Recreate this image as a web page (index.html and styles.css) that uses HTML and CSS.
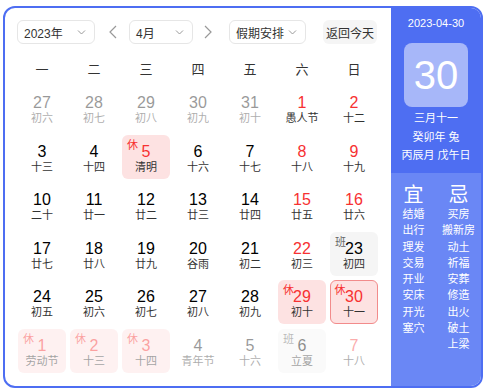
FILE: index.html
```html
<!DOCTYPE html>
<html lang="zh-CN">
<head>
    <meta charset="UTF-8">
    <meta name="viewport" content="width=device-width, initial-scale=1.0">
    <title>万年历</title>
    <link rel="stylesheet" href="styles.css">
</head>
<body>

    <div class="calendar">
        <div class="main">
            <div class="toolbar">
                <div class="select year">2023年
                    <svg width="9" height="5" viewBox="0 0 9 5"><path d="M1 0.5l3.5 3.5 3.5-3.5" fill="none" stroke="#999" stroke-width="1"/></svg>
                </div>
                <span class="arrow prev">
                    <svg width="8" height="14" viewBox="0 0 8 14"><path d="M7 1L1 7l6 6" fill="none" stroke="#999" stroke-width="1.2"/></svg>
                </span>
                <div class="select month">4月
                    <svg width="9" height="5" viewBox="0 0 9 5"><path d="M1 0.5l3.5 3.5 3.5-3.5" fill="none" stroke="#999" stroke-width="1"/></svg>
                </div>
                <span class="arrow next">
                    <svg width="8" height="14" viewBox="0 0 8 14"><path d="M1 1l6 6-6 6" fill="none" stroke="#999" stroke-width="1.2"/></svg>
                </span>
                <div class="select holiday">假期安排
                    <svg width="9" height="5" viewBox="0 0 9 5"><path d="M1 0.5l3.5 3.5 3.5-3.5" fill="none" stroke="#999" stroke-width="1"/></svg>
                </div>
                <button class="today-btn">返回今天</button>
            </div>

            <div class="week">
                <span>一</span><span>二</span><span>三</span><span>四</span><span>五</span><span>六</span><span>日</span>
            </div>

            <div class="days">
                <!-- row 1 -->
                <div class="cell other"><b>27</b><i>初六</i></div>
                <div class="cell other"><b>28</b><i>初七</i></div>
                <div class="cell other"><b>29</b><i>初八</i></div>
                <div class="cell other"><b>30</b><i>初九</i></div>
                <div class="cell other"><b>31</b><i>初十</i></div>
                <div class="cell weekend"><b>1</b><i>愚人节</i></div>
                <div class="cell weekend"><b>2</b><i>十二</i></div>
                <!-- row 2 -->
                <div class="cell"><b>3</b><i>十三</i></div>
                <div class="cell"><b>4</b><i>十四</i></div>
                <div class="cell rest"><em>休</em><b>5</b><i>清明</i></div>
                <div class="cell"><b>6</b><i>十六</i></div>
                <div class="cell"><b>7</b><i>十七</i></div>
                <div class="cell weekend"><b>8</b><i>十八</i></div>
                <div class="cell weekend"><b>9</b><i>十九</i></div>
                <!-- row 3 -->
                <div class="cell"><b>10</b><i>二十</i></div>
                <div class="cell"><b>11</b><i>廿一</i></div>
                <div class="cell"><b>12</b><i>廿二</i></div>
                <div class="cell"><b>13</b><i>廿三</i></div>
                <div class="cell"><b>14</b><i>廿四</i></div>
                <div class="cell weekend"><b>15</b><i>廿五</i></div>
                <div class="cell weekend"><b>16</b><i>廿六</i></div>
                <!-- row 4 -->
                <div class="cell"><b>17</b><i>廿七</i></div>
                <div class="cell"><b>18</b><i>廿八</i></div>
                <div class="cell"><b>19</b><i>廿九</i></div>
                <div class="cell"><b>20</b><i>谷雨</i></div>
                <div class="cell"><b>21</b><i>初二</i></div>
                <div class="cell weekend"><b>22</b><i>初三</i></div>
                <div class="cell work"><em>班</em><b>23</b><i>初四</i></div>
                <!-- row 5 -->
                <div class="cell"><b>24</b><i>初五</i></div>
                <div class="cell"><b>25</b><i>初六</i></div>
                <div class="cell"><b>26</b><i>初七</i></div>
                <div class="cell"><b>27</b><i>初八</i></div>
                <div class="cell"><b>28</b><i>初九</i></div>
                <div class="cell rest"><em>休</em><b>29</b><i>初十</i></div>
                <div class="cell rest selected"><em>休</em><b>30</b><i>十一</i></div>
                <!-- row 6 -->
                <div class="cell rest other"><em>休</em><b>1</b><i>劳动节</i></div>
                <div class="cell rest other"><em>休</em><b>2</b><i>十三</i></div>
                <div class="cell rest other"><em>休</em><b>3</b><i>十四</i></div>
                <div class="cell other"><b>4</b><i>青年节</i></div>
                <div class="cell other"><b>5</b><i>十六</i></div>
                <div class="cell work other"><em>班</em><b>6</b><i>立夏</i></div>
                <div class="cell weekend other"><b>7</b><i>十八</i></div>
            </div>
        </div>

        <aside class="side">
            <div class="today">
                <div class="date">2023-04-30</div>
                <div class="big-day">30</div>
                <div class="lunar">三月十一</div>
                <div class="lunar">癸卯年 兔</div>
                <div class="lunar">丙辰月 戊午日</div>
            </div>
            <div class="yiji">
                <ul>
                    <li class="head">宜</li>
                    <li>结婚</li>
                    <li>出行</li>
                    <li>理发</li>
                    <li>交易</li>
                    <li>开业</li>
                    <li>安床</li>
                    <li>开光</li>
                    <li>塞穴</li>
                </ul>
                <ul>
                    <li class="head">忌</li>
                    <li>买房</li>
                    <li>搬新房</li>
                    <li>动土</li>
                    <li>祈福</li>
                    <li>安葬</li>
                    <li>修造</li>
                    <li>出火</li>
                    <li>破土</li>
                    <li>上梁</li>
                </ul>
            </div>
        </aside>
    </div>

</body>
</html>
```

FILE: styles.css
```css
body {
    margin: 0;
    font-family: "Liberation Sans", Arial, "Noto Sans CJK SC", sans-serif;
    background: #fff;
    color: #333;
}
.calendar {
    display: flex;
    box-sizing: border-box;
    width: 480px;
    height: 382px;
    margin: 6px 0 0 3px;
    border: 2px solid #4e6ef2;
    border-radius: 12px;
    overflow: hidden;
}
.main {
    width: 386px;
    padding: 12px 0 0 12px;
    box-sizing: border-box;
}
.toolbar {
    display: flex;
    align-items: center;
    height: 24px;
}
.select {
    box-sizing: border-box;
    height: 24px;
    display: flex;
    align-items: center;
    justify-content: space-between;
    padding: 0 8px 0 6px;
    border: 1px solid #e6e6e6;
    border-radius: 6px;
    font-size: 12px;
    color: #333;
}
.year {
    width: 78px;
}
.month {
    width: 64px;
}
.holiday {
    width: 77px;
}
.arrow {
    width: 14px;
    display: flex;
    justify-content: center;
}
.prev {
    margin: 0 9px 0 11px;
}
.next {
    margin: 0 14px 0 8px;
}
.today-btn {
    margin-left: 17px;
    width: 54px;
    height: 24px;
    padding: 0;
    border: none;
    border-radius: 6px;
    background: #f5f5f5;
    font-family: inherit;
    font-size: 12px;
    color: #333;
}
.week {
    display: grid;
    grid-template-columns: repeat(7, 48px);
    column-gap: 4px;
    margin: 12px 0 0 1px;
    height: 28px;
    line-height: 28px;
    text-align: center;
    font-size: 13px;
    color: #333;
}
.days {
    display: grid;
    grid-template-columns: repeat(7, 48px);
    grid-template-rows: repeat(6, 44px);
    column-gap: 4px;
    row-gap: 4.5px;
    margin: 2px 0 0 1px;
}
.cell {
    position: relative;
    box-sizing: border-box;
    border-radius: 6px;
    display: flex;
    flex-direction: column;
    align-items: center;
    padding-top: 8px;
}
.cell b {
    font-weight: normal;
    font-size: 16px;
    line-height: 18px;
    color: #000;
}
.cell i {
    font-style: normal;
    font-size: 11px;
    line-height: 12px;
    color: #333;
}
.cell em {
    position: absolute;
    left: 5px;
    top: 4px;
    font-style: normal;
    font-size: 11px;
    line-height: 12px;
}
.weekend b,
.rest b {
    color: #f73131;
}
.rest {
    background: #fde2e2;
}
.rest em {
    color: #f73131;
}
.work {
    background: #f5f5f5;
}
.work em {
    color: #666;
}
.selected {
    border: 1.5px solid #f28b8b;
    padding-top: 6.5px;
}
.selected em {
    left: 3.5px;
    top: 2.5px;
}
.other {
    opacity: 0.4;
}
.other.rest,
.other.work {
    opacity: 0.45;
}
.side {
    flex: 1;
    display: flex;
    flex-direction: column;
    color: #fff;
}
.today {
    height: 165px;
    background: #4e6ef2;
    text-align: center;
    padding-top: 8px;
    box-sizing: border-box;
}
.date {
    font-size: 11px;
    line-height: 14px;
}
.big-day {
    width: 64px;
    height: 64px;
    margin: 13px auto 2px;
    border-radius: 8px;
    background: rgba(255, 255, 255, 0.5);
    font-size: 40px;
    line-height: 64px;
}
.lunar {
    font-size: 11px;
    line-height: 18.5px;
}
.yiji {
    flex: 1;
    display: flex;
    background: #6a87f5;
    padding-top: 11px;
}
.yiji ul {
    width: 45px;
    margin: 0;
    padding: 0;
    list-style: none;
    text-align: center;
}
.yiji li {
    font-size: 11px;
    line-height: 16.3px;
}
.yiji .head {
    font-size: 20px;
    line-height: 22px;
}
```
